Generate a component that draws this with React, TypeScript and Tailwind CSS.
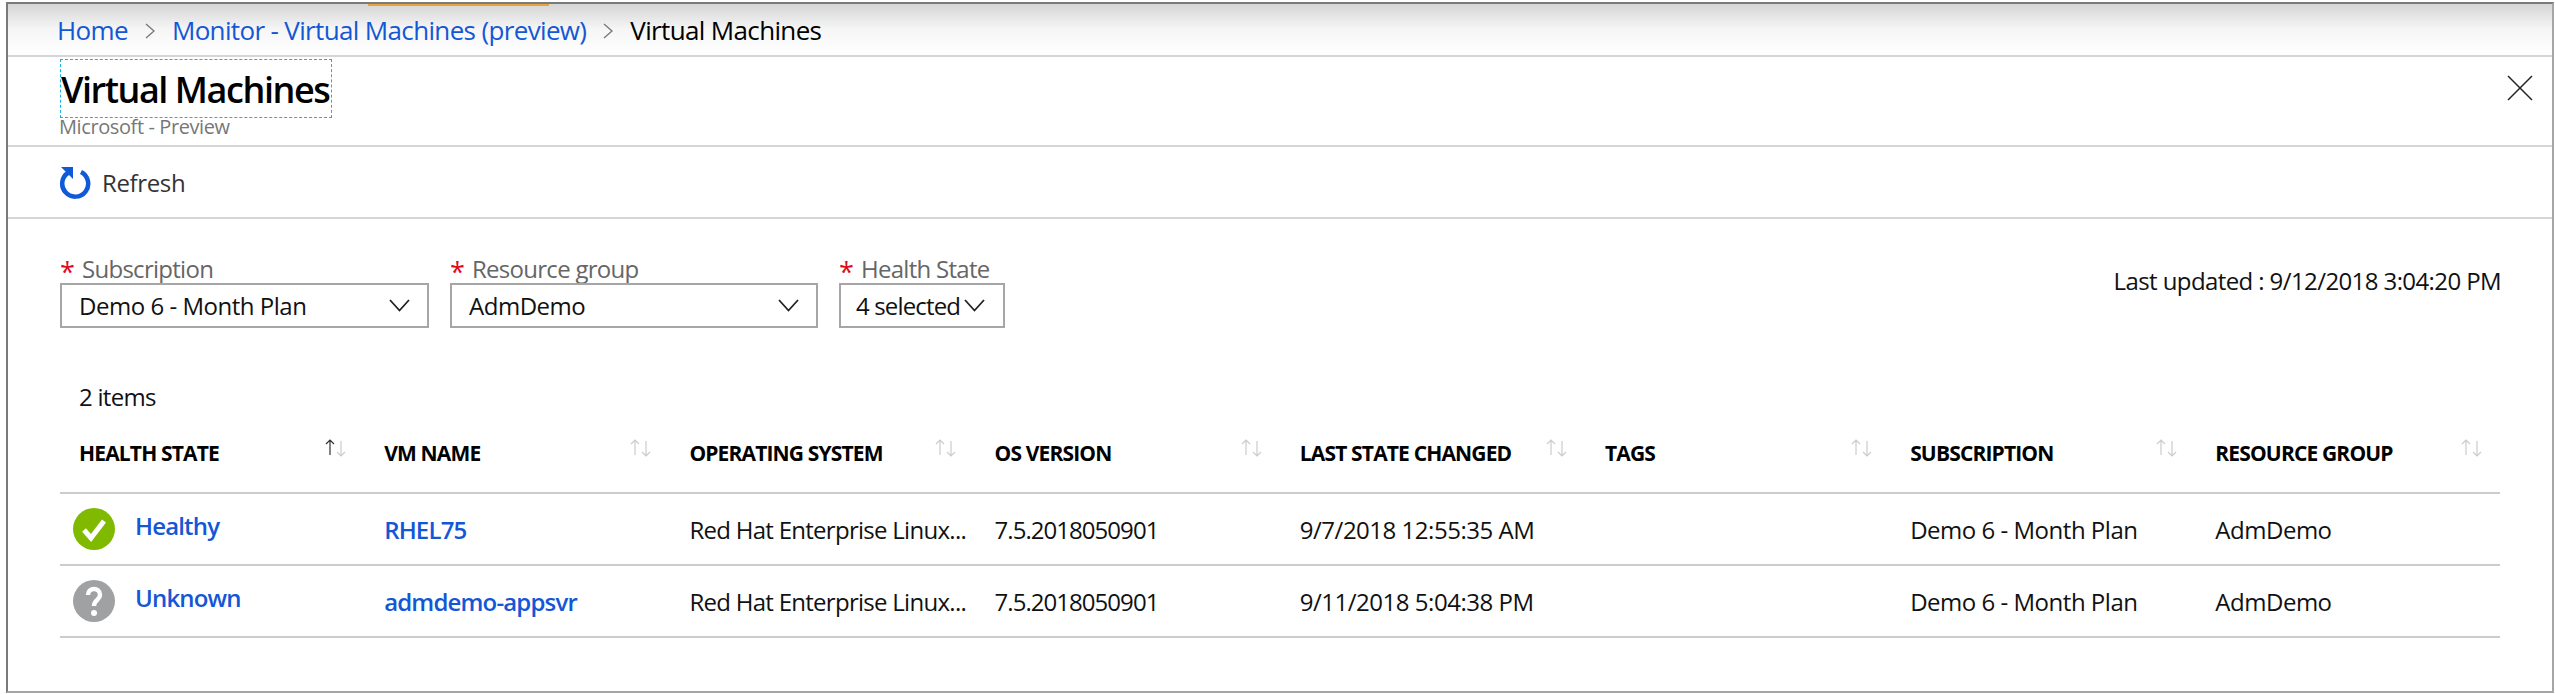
const COLUMNS = [
  "HEALTH STATE",
  "VM NAME",
  "OPERATING SYSTEM",
  "OS VERSION",
  "LAST STATE CHANGED",
  "TAGS",
  "SUBSCRIPTION",
  "RESOURCE GROUP",
];

const ROWS = [
  { state: "Healthy", name: "RHEL75", changed: "9/7/2018 12:55:35 AM" },
  { state: "Unknown", name: "admdemo-appsvr", changed: "9/11/2018 5:04:38 PM" },
];

function SortIcon({ active }: { active?: boolean }) {
  return (
    <svg width="23" height="18" viewBox="0 0 23 18" fill="none" strokeWidth="1.2" className="absolute left-[245px] top-[-2px]">
      <path d="M6 16V1M2 5l4-4 4 4" stroke={active ? "#333" : "#ccc"} />
      <path d="M17 2v15M13 13l4 4 4-4" stroke="#ccc" />
    </svg>
  );
}

function Chevron() {
  return (
    <svg width="21" height="13" viewBox="0 0 21 13" fill="none" stroke="#222" strokeWidth="1.8" className="shrink-0">
      <path d="M1 1l9.5 10.5L20 1" />
    </svg>
  );
}

function CrumbArrow() {
  return (
    <svg width="10" height="16" viewBox="0 0 10 16" fill="none" stroke="#777" strokeWidth="1.3" className="shrink-0">
      <path d="M1 1l8 7-8 7" />
    </svg>
  );
}

function FilterLabel({ label }: { label: string }) {
  return (
    <div className="flex h-[24px] items-start">
      <span className="mt-[-2px] w-[22px] text-[27px] leading-[30px] text-[#e00b1c]">*</span>
      <span className="mt-[-3px] text-[24px] leading-[26px] tracking-[-0.03em] text-[#666]">{label}</span>
    </div>
  );
}

function Filter({ label, value, width }: { label: string; value: string; width: string }) {
  return (
    <div className={`flex flex-col ${width}`}>
      <FilterLabel label={label} />
      <div className="flex h-[45px] items-center justify-between border-2 border-[#a6a6a6] pl-[17px] pr-[17px] text-[24px] tracking-[-0.02em] text-[#111]">
        <span>{value}</span>
        <Chevron />
      </div>
    </div>
  );
}

export default function App() {
  return (
    <div className="h-[694px] w-full bg-white pb-[1px] pl-[6px] pr-[1px] pt-[2px] font-['Open_Sans',sans-serif]">
      <div className="flex h-full flex-col border-2 border-[#7a7a7a] border-b-[#a6a6a6] border-r-[#a6a6a6]">
        {/* Breadcrumb */}
        <div className="relative flex h-[53px] shrink-0 items-center gap-[17px] border-b-2 border-[#d6d6d6] bg-gradient-to-b from-[#d6d6d6] via-[#f6f6f6] to-white pl-[49px] pt-[2px] text-[26px] tracking-[-0.025em]">
          <div className="absolute left-[360px] top-0 h-[2px] w-[181px] bg-[#e8a33d]" />
          <span className="text-[#1457d6]">Home</span>
          <CrumbArrow />
          <span className="text-[#1457d6]">Monitor - Virtual Machines (preview)</span>
          <CrumbArrow />
          <span className="text-black">Virtual Machines</span>
        </div>

        {/* Title */}
        <div className="flex h-[90px] shrink-0 justify-between border-b-2 border-[#d6d6d6] pl-[52px] pr-[19px]">
          <div className="pt-[2px]">
            <div className="flex h-[59px] w-[272px] items-center whitespace-nowrap border border-dashed border-[#12b5e6] pt-[2px] text-[36px] font-semibold tracking-[-0.04em] text-black">
              Virtual Machines
            </div>
            <div className="mt-[-1px] ml-[-1px] text-[20px] leading-[20px] tracking-[-0.02em] text-[#777]">Microsoft - Preview</div>
          </div>
          <svg width="26" height="26" viewBox="0 0 26 26" fill="none" stroke="#222" strokeWidth="1.5" className="mt-[18px]">
            <path d="M1 1l24 24M25 1L1 25" />
          </svg>
        </div>

        {/* Toolbar */}
        <div className="flex h-[72px] shrink-0 items-center gap-[11px] border-b-2 border-[#d6d6d6] pl-[51px] text-[24px] tracking-[-0.015em] text-[#333]">
          <svg width="32" height="34" viewBox="0 0 32 34" fill="none">
            <path d="M9.5 7.5A13 13 0 1 0 22 7" stroke="#0f5bd7" strokeWidth="4.5" />
            <path d="M2 2h12v12z" fill="#0f5bd7" />
          </svg>
          <span className="pt-[2px]">Refresh</span>
        </div>

        {/* Filters */}
        <div className="flex shrink-0 justify-between pl-[52px] pr-[51px] pt-[40px]">
          <div className="flex gap-[21px]">
            <Filter label="Subscription" value="Demo 6 - Month Plan" width="w-[369px]" />
            <Filter label="Resource group" value="AdmDemo" width="w-[368px]" />
            <div className="flex w-[166px] flex-col">
              <FilterLabel label="Health State" />
              <div className="flex h-[45px] items-center gap-[4px] border-2 border-[#a6a6a6] pl-[15px] text-[24px] tracking-[-0.035em] text-[#111]">
                <span>4 selected</span>
                <Chevron />
              </div>
            </div>
          </div>
          <div className="pt-[8px] text-[24px] leading-[28px] tracking-[-0.025em] text-[#111]">Last updated : 9/12/2018 3:04:20 PM</div>
        </div>

        {/* Table */}
        <div className="flex w-[2492px] flex-col pl-[52px] pt-[55px]">
          <div className="pl-[19px] text-[24px] leading-[28px] tracking-[-0.03em] text-[#111]">2 items</div>
          <div className="grid h-[83px] grid-cols-[repeat(8,305.2px)] border-b-2 border-[#ccc] pl-[19px] pt-[30px]">
            {COLUMNS.map((col, i) => (
              <div key={col} className="relative h-[24px] text-[21px] font-bold leading-[24px] tracking-[-0.04em] text-black">
                {col}
                <SortIcon active={i === 0} />
              </div>
            ))}
          </div>
          {ROWS.map((row) => (
            <div key={row.name} className="grid h-[72px] grid-cols-[repeat(8,305.2px)] items-center border-b-2 border-[#ccc] pl-[19px] pt-[2px] text-[24px] tracking-[-0.02em] text-[#111]">
              <div className="ml-[-6px] flex items-center gap-[20px]">
                {row.state === "Healthy" ? (
                  <svg width="42" height="42" viewBox="0 0 42 42" className="mt-[-2px]">
                    <circle cx="21" cy="21" r="21" fill="#7fba00" />
                    <path d="M11 22l7 8 13-17" fill="none" stroke="#fff" strokeWidth="5" />
                  </svg>
                ) : (
                  <svg width="42" height="42" viewBox="0 0 42 42" className="mt-[-2px]">
                    <circle cx="21" cy="21" r="21" fill="#a0a1a2" />
                    <path d="M15 15c0-8 12-8 12 0 0 5-6 5-6 11" fill="none" stroke="#fff" strokeWidth="4.5" />
                    <circle cx="21" cy="33" r="3" fill="#fff" />
                  </svg>
                )}
                <span className="mt-[-8px] font-semibold tracking-[-0.035em] text-[#1457d6]">{row.state}</span>
              </div>
              <span className="font-semibold tracking-[-0.035em] text-[#1457d6]">{row.name}</span>
              <span className="tracking-[-0.03em]">Red Hat Enterprise Linux...</span>
              <span className="tracking-[-0.04em]">7.5.2018050901</span>
              <span className="tracking-[-0.02em]">{row.changed}</span>
              <span />
              <span>Demo 6 - Month Plan</span>
              <span>AdmDemo</span>
            </div>
          ))}
        </div>
      </div>
    </div>
  );
}
